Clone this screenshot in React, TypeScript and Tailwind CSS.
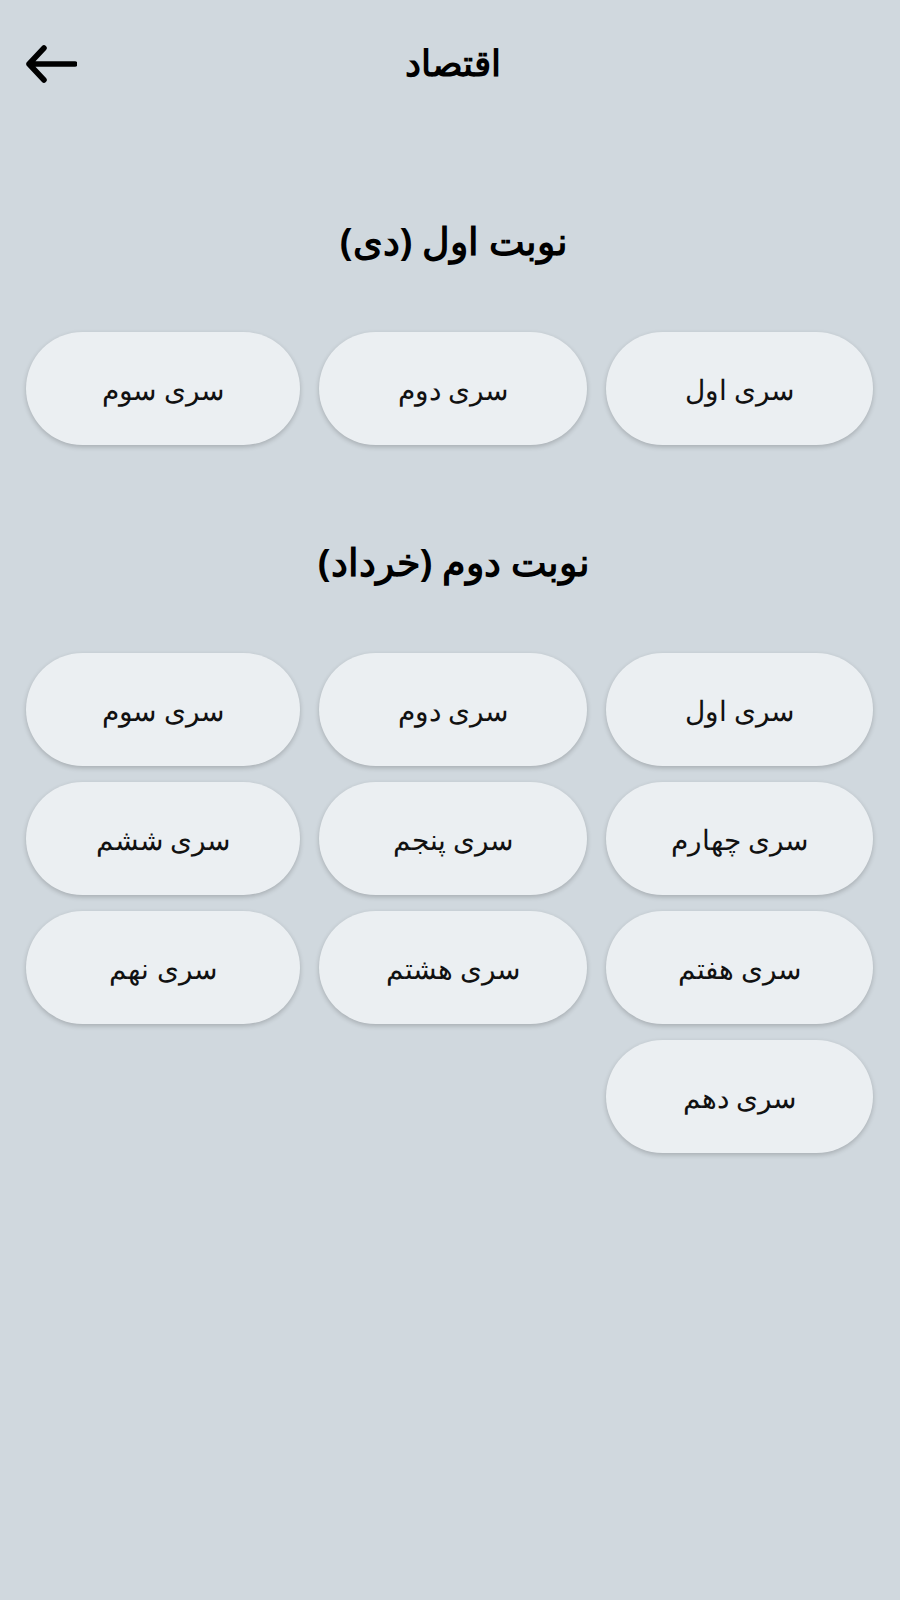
const firstRound = ['سری اول', 'سری دوم', 'سری سوم']

const secondRound = [
  'سری اول',
  'سری دوم',
  'سری سوم',
  'سری چهارم',
  'سری پنجم',
  'سری ششم',
  'سری هفتم',
  'سری هشتم',
  'سری نهم',
  'سری دهم',
]

function BackArrow() {
  return (
    <svg width="52" height="38" viewBox="0 0 52 38" fill="none" aria-hidden="true">
      <path
        d="M50 19H4M19 3L4 19l15 16"
        stroke="#000"
        strokeWidth="5.5"
        strokeLinecap="round"
        strokeLinejoin="round"
      />
    </svg>
  )
}

function SeriesButton({ label }: { label: string }) {
  return (
    <button
      type="button"
      className="h-[113px] rounded-full bg-[#ebeff2] text-[28px] text-[#111] shadow-[0_2px_5px_rgba(0,0,0,0.2)]"
    >
      {label}
    </button>
  )
}

function Section({ title, items, first }: { title: string; items: string[]; first?: boolean }) {
  return (
    <section>
      <h2
        className={`${first ? 'mt-[84px]' : 'mt-[86px]'} mb-[62px] h-[60px] text-center text-[38px] font-bold leading-[60px] pl-[8px]`}
      >
        {title}
      </h2>
      <div dir="rtl" className="grid grid-cols-[267px_268px_274px] gap-x-[19px] gap-y-[16px] pr-[27px] pl-[26px]">
        {items.map((label, i) => (
          <SeriesButton key={i} label={label} />
        ))}
      </div>
    </section>
  )
}

export default function App() {
  return (
    <div className="min-h-[1600px] w-full bg-[#d0d8de] font-['Noto_Sans',sans-serif] text-black">
      <header className="relative flex h-[126px] items-center justify-center">
        <button type="button" className="absolute left-[25px] top-[45px]">
          <BackArrow />
        </button>
        <h1 className="pl-[6px] text-[36px] font-bold">اقتصاد</h1>
      </header>

      <Section title="نوبت اول (دی)" items={firstRound} first />
      <Section title="نوبت دوم (خرداد)" items={secondRound} />
    </div>
  )
}
